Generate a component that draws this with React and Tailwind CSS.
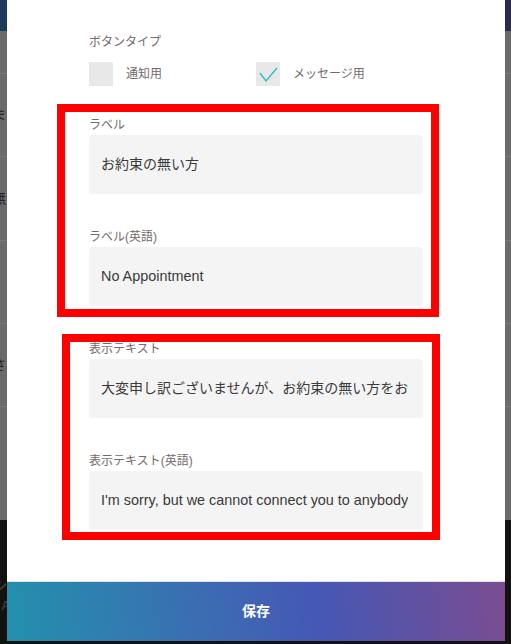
import React from 'react';

const font = { fontFamily: '"Liberation Sans", "Noto Sans CJK JP", sans-serif' };

// rows of the list page that shows behind the dialog
const bgRows = [
  { h: 'h-[43px]', text: '' },
  { h: 'h-[83px]', text: 'ま' },
  { h: 'h-[84px]', text: '無' },
  { h: 'h-[83px]', text: '' },
  { h: 'h-[83px]', text: 'さ' },
];

function Field({ label, value, latin = false, className = '' }) {
  return (
    <div className={className}>
      <div className="text-[12px] leading-[16px] text-[#74696a]">{label}</div>
      <div className="mt-[2px] h-[59px] rounded-[4px] bg-[#f4f4f4] pl-3 pr-[15px] flex items-center">
        <div
          className={`w-full overflow-hidden whitespace-nowrap text-[#3a3a3a] ${
            latin ? 'text-[14.4px]' : 'text-[14px]'
          }`}
        >
          {value}
        </div>
      </div>
    </div>
  );
}

export default function App() {
  return (
    <div className="relative w-[511px] h-[644px] overflow-hidden bg-[#141210]" style={font}>
      {/* page behind the dialog */}
      <div className="flex flex-col">
        <div className="h-[31px] bg-[linear-gradient(90deg,#1b3a5c,#2b2955)]" />
        <div className="bg-[#6a6a6a]">
          {bgRows.map((r, i) => (
            <div key={i} className={`${r.h} border-b border-[#7a7a7a] flex items-center`}>
              <span className="-ml-[8px] text-[14px] text-[#222]">{r.text}</span>
            </div>
          ))}
          <div className="h-[113px]" />
        </div>
        <div className="flex flex-col pt-[58px] gap-[4px]">
          <span className="-ml-[6px] text-[13px] font-bold text-[#3a3a3a] leading-[16px]">シ</span>
          <span className="ml-[1px] text-[13px] font-bold text-[#3a3a3a] leading-[16px]">A</span>
        </div>
      </div>

      {/* dialog */}
      <div className="absolute left-[7px] top-0 w-[498px] h-[641px] bg-white flex flex-col">
        <div className="flex-1 px-[82px] pt-[34px]">
          <div className="text-[12px] leading-[16px] text-[#74696a]">ボタンタイプ</div>
          <div className="mt-[12px] grid grid-cols-2">
            <div className="flex items-center">
              <div className="w-[24px] h-[24px] bg-[#e8e8e8]" />
              <span className="ml-[13px] text-[12px] text-[#74696a]">通知用</span>
            </div>
            <div className="flex items-center">
              <div className="w-[24px] h-[24px] bg-[#e8e8e8]">
                <svg viewBox="0 0 24 24" width="24" height="24" fill="none">
                  <path d="M4 11 L10 19 L21 6" stroke="#27c0c5" strokeWidth="1.4" />
                </svg>
              </div>
              <span className="ml-[13px] text-[12px] text-[#74696a]">メッセージ用</span>
            </div>
          </div>

          <Field className="mt-[31px]" label="ラベル" value="お約束の無い方" />
          <Field className="mt-[35px]" label="ラベル(英語)" value="No Appointment" latin />
          <Field className="mt-[35px]" label="表示テキスト" value="大変申し訳ございませんが、お約束の無い方をお通しできません" />
          <Field
            className="mt-[35px]"
            label="表示テキスト(英語)"
            value="I'm sorry, but we cannot connect you to anybody without an appointment"
            latin
          />
        </div>

        <div className="h-[60px] border-t border-[#e2e2e2] bg-[linear-gradient(80deg,#2391ad,#3c6cb2_40%,#4558b5_62%,#7b4c90)] flex items-center justify-center">
          <span className="text-white text-[14px] font-bold">保存</span>
        </div>

        {/* red annotation frames */}
        <div className="absolute left-[50px] top-[104px] w-[382px] h-[213px] border-[8px] border-[#fe0000]" />
        <div className="absolute left-[55px] top-[334px] w-[378px] h-[206px] border-[8px] border-[#fe0000]" />
      </div>
    </div>
  );
}
